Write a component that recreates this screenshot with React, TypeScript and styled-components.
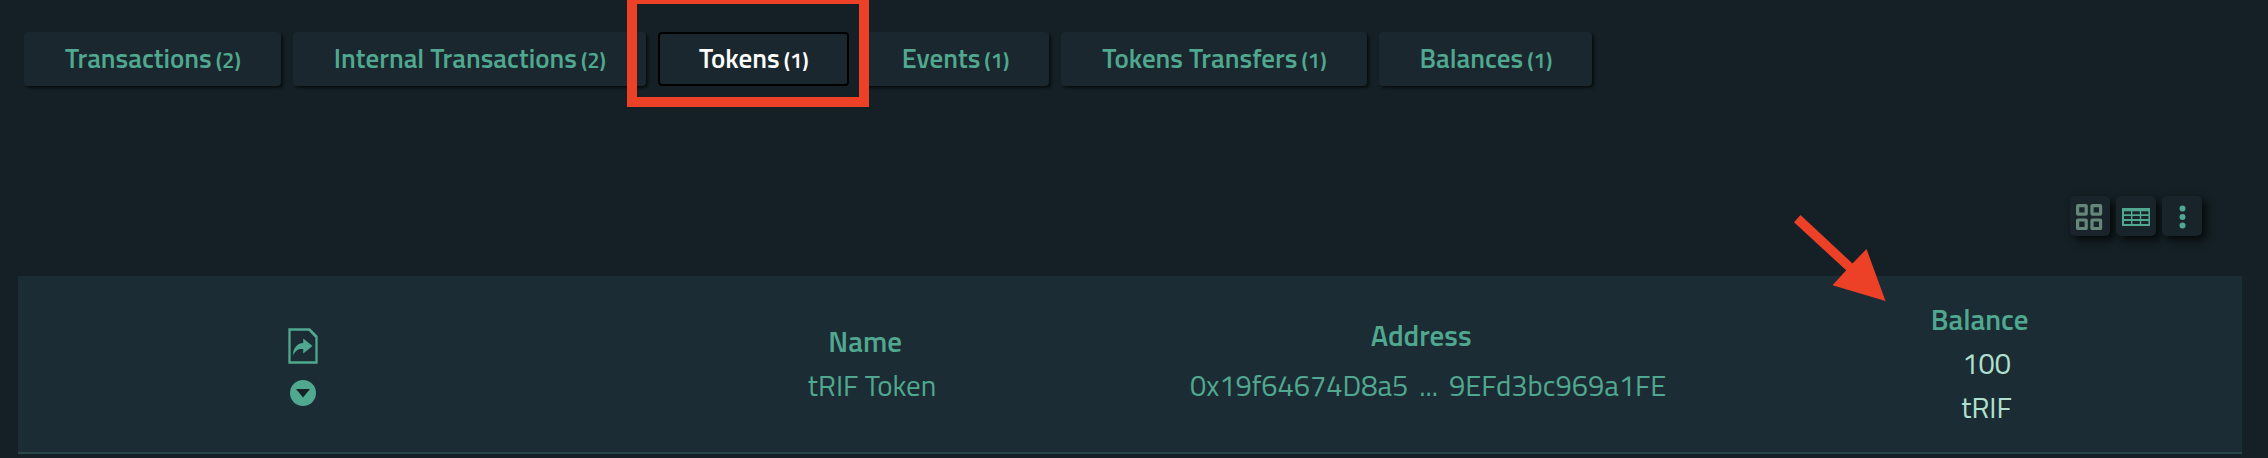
import React from 'react';
import styled, { createGlobalStyle, css } from 'styled-components';

const color = {
  page: '#142025',
  raised: '#1a272e',
  panel: '#1c2c34',
  line: '#28464a',
  green: '#4fa88f',
  muted: '#64877a',
  pale: '#b0e0d0',
  mark: '#ec4027',
};

const GlobalStyle = createGlobalStyle`
  * { box-sizing: border-box; }
  body {
    margin: 0;
    background: ${color.page};
    color: ${color.green};
    font-family: 'Titillium Web', Roboto, sans-serif;
    font-size: 29px;
    line-height: 44px;
  }
`;

const Page = styled.main`
  padding: 32px 26px 4px 18px;
`;

const Tabs = styled.nav`
  display: flex;
  gap: 12px;
  padding-left: 6px;
`;

const Tab = styled.button<{ $active?: boolean }>`
  position: relative;
  display: flex;
  align-items: baseline;
  justify-content: center;
  gap: 4px;
  height: 54px;
  padding: 2px 38px 0 39px;
  border: 2px solid ${(p) => (p.$active ? '#000' : 'transparent')};
  border-radius: 4px;
  background: ${color.raised};
  background-clip: border-box;
  box-shadow: ${(p) => (p.$active ? 'none' : '2px 2px 3px rgba(0, 0, 0, 0.6)')};
  color: ${(p) => (p.$active ? '#fff' : color.green)};
  font: 600 27px/44px 'Titillium Web', Roboto, sans-serif;
  white-space: nowrap;
  cursor: pointer;
`;

const Count = styled.span`
  font-size: 22px;
`;

const Highlight = styled.span`
  position: absolute;
  z-index: 1;
  inset: -40px -22px -23px -33px;
  border: 10px solid ${color.mark};
  pointer-events: none;
`;

const Toolbar = styled.div`
  display: flex;
  justify-content: flex-end;
  gap: 6px;
  margin: 110px 40px 40px 0;
`;

const ToolButton = styled.button<{ $muted?: boolean }>`
  display: flex;
  align-items: center;
  justify-content: center;
  width: 40px;
  height: 40px;
  padding: 2px 0 0;
  border: 0;
  border-radius: 5px;
  background: #18242a;
  box-shadow: 4px 4px 8px rgba(0, 0, 0, 0.75);
  color: ${(p) => (p.$muted ? color.muted : color.green)};
  cursor: pointer;
`;

const Panel = styled.section`
  display: grid;
  grid-template-columns: 51fr 50fr 50fr 49fr;
  min-height: 178px;
  background: ${color.panel};
  border-bottom: 2px solid ${color.line};
`;

const cell = css`
  display: flex;
  flex-direction: column;
  align-items: center;
  justify-content: center;
`;

const Actions = styled.div`
  ${cell}
  gap: 16px;
  padding: 6px 0 0 2px;
`;

const IconButton = styled.button`
  display: flex;
  padding: 0;
  border: 0;
  background: none;
  color: ${color.green};
  cursor: pointer;
`;

const Field = styled.dl<{ $indent?: number }>`
  ${cell}
  position: relative;
  margin: 0;
  padding: 0 0 2px ${(p) => p.$indent ?? 4}px;
`;

const Label = styled.dt`
  font-weight: 600;
`;

const Value = styled.dd<{ $spaced?: boolean; $pale?: boolean }>`
  margin: ${(p) => (p.$spaced ? '6px 0' : '0')};
  padding-left: 14px;
  color: ${(p) => (p.$pale ? color.pale : color.green)};
`;

const ValueLink = styled.a`
  display: flex;
  gap: 11px;
  color: inherit;
  text-decoration: none;
`;

const Arrow = styled.svg`
  position: absolute;
  top: -61px;
  left: calc(50% - 176px);
  fill: ${color.mark};
  pointer-events: none;
`;

const tabs = [
  { name: 'Transactions', count: 2 },
  { name: 'Internal Transactions', count: 2 },
  { name: 'Tokens', count: 1, active: true },
  { name: 'Events', count: 1 },
  { name: 'Tokens Transfers', count: 1 },
  { name: 'Balances', count: 1 },
];

const GridIcon = () => (
  <svg width="28" height="26" viewBox="0 0 28 26" fill="none" stroke="currentColor" strokeWidth="3.2">
    <rect x="1.6" y="1.6" width="8.6" height="8.6" rx="0.5" />
    <rect x="16" y="1.6" width="8.6" height="8.6" rx="0.5" />
    <rect x="1.6" y="16" width="8.6" height="8.6" rx="0.5" />
    <rect x="16" y="16" width="8.6" height="8.6" rx="0.5" />
  </svg>
);

const TableIcon = () => (
  <svg width="28" height="18" viewBox="0 0 28 18" fill="currentColor">
    <path
      fillRule="evenodd"
      d="M0 0h28v18H0zM2 3.2v3h7v-3zM10.4 3.2v3h7.4v-3zM19.2 3.2v3H26.4v-3zM2 8v3h7V8zM10.4 8v3h7.4V8zM19.2 8v3h7.2V8zM2 13v3h7v-3zM10.4 13v3h7.4v-3zM19.2 13v3h7.2v-3z"
    />
  </svg>
);

const DotsIcon = () => (
  <svg width="8" height="24" viewBox="0 0 8 24" fill="currentColor">
    <circle cx="4.5" cy="3.5" r="3" />
    <circle cx="4.5" cy="12" r="3" />
    <circle cx="4.5" cy="20.5" r="3" />
  </svg>
);

const ShareFileIcon = () => (
  <svg width="30" height="36" viewBox="0 0 30 36">
    <path d="M1.5 1.5H21.5L28.5 8.5V34.5H1.5z" fill="none" stroke="currentColor" strokeWidth="2.3" />
    <path d="M20.5 1v1.5L27 9.5H29V8L22 1z" fill="currentColor" />
    <path d="M15.2 10.5L24.5 18L15.2 25.5V21.2C10.5 20.7 7.5 22.5 5 27.5C5 20 9 15.5 15.2 15z" fill="currentColor" />
  </svg>
);

const ExpandIcon = () => (
  <svg width="26" height="26" viewBox="0 0 26 26">
    <circle cx="13" cy="13" r="13" fill="currentColor" />
    <path d="M6 9h14l-7 8.5z" fill={color.page} />
  </svg>
);

export default function App() {
  return (
    <>
      <GlobalStyle />
      <Page>
        <Tabs aria-label="Address sections">
          {tabs.map((t) => (
            <Tab key={t.name} type="button" $active={t.active} aria-pressed={!!t.active}>
              <span>{t.name}</span>
              <Count>({t.count})</Count>
              {t.active && <Highlight />}
            </Tab>
          ))}
        </Tabs>

        <Toolbar>
          <ToolButton type="button" $muted aria-label="Grid view"><GridIcon /></ToolButton>
          <ToolButton type="button" aria-label="Table view"><TableIcon /></ToolButton>
          <ToolButton type="button" aria-label="More options"><DotsIcon /></ToolButton>
        </Toolbar>

        <Panel>
          <Actions>
            <IconButton type="button" aria-label="Open token"><ShareFileIcon /></IconButton>
            <IconButton type="button" aria-label="Expand row"><ExpandIcon /></IconButton>
          </Actions>
          <Field>
            <Label>Name</Label>
            <Value><ValueLink href="#token">tRIF Token</ValueLink></Value>
          </Field>
          <Field>
            <Label>Address</Label>
            <Value $spaced>
              <ValueLink href="#address">
                <span>0x19f64674D8a5</span>
                <span>...</span>
                <span>9EFd3bc969a1FE</span>
              </ValueLink>
            </Value>
          </Field>
          <Field $indent={20}>
            <Label>Balance</Label>
            <Value $pale>100</Value>
            <Value $pale>tRIF</Value>
            <Arrow width="92" height="87" viewBox="0 0 92 87" aria-hidden="true">
              <path d="M6.5 0L0 7.3L52.2 55.3L38.5 70.3L91.5 86L72.5 34L58.5 48.5z" />
            </Arrow>
          </Field>
        </Panel>
      </Page>
    </>
  );
}
